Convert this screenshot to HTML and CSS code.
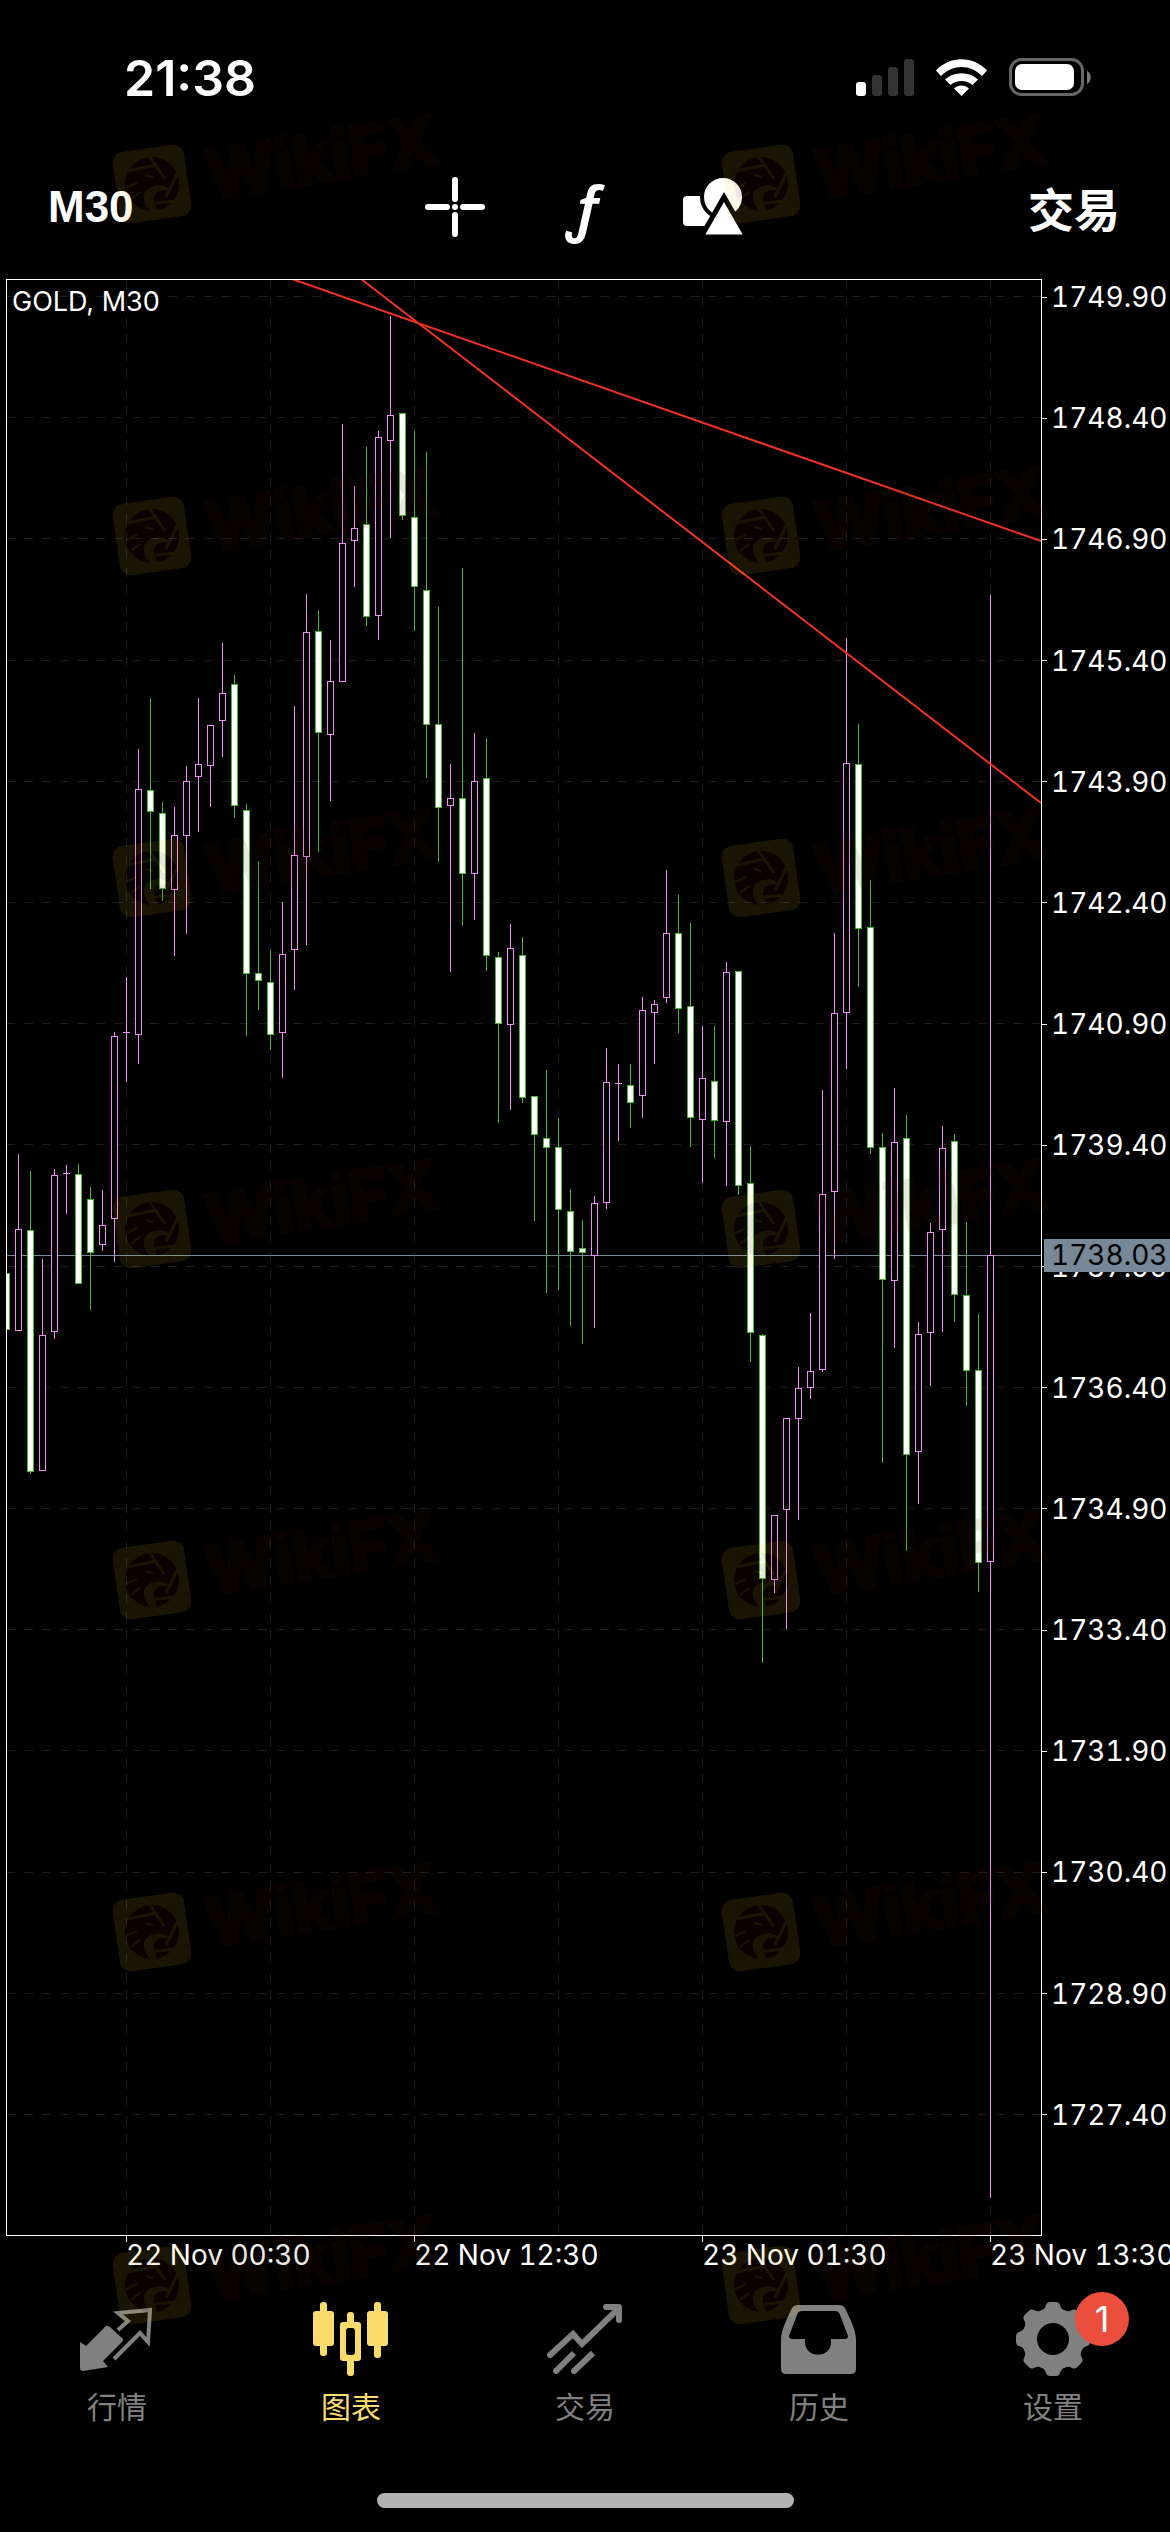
FILE: index.html
```
<!DOCTYPE html>
<html lang="zh-CN">

<head>
    <meta charset="utf-8" />
    <title>GOLD, M30</title>
    <meta name="viewport" content="width=device-width, initial-scale=1" />
    <link rel="stylesheet" href="styles.css">
</head>

<body>
    <div class="status-bar">
        <span class="time">21:38</span>
        <svg class="status-icons" viewBox="0 0 238 42" aria-hidden="true">
            <rect x="2" y="25" width="10" height="14" rx="3" fill="#fff" />
            <rect x="18" y="18" width="10" height="21" rx="3" fill="#333" />
            <rect x="34" y="10" width="10" height="29" rx="3" fill="#333" />
            <rect x="50" y="2" width="10" height="37" rx="3" fill="#333" />
            <path d="M82 13.500 C96 -1.500 119 -1.500 133 13.500 L128 19 C116 7 99 7 87 19 Z" fill="#fff" />
            <path d="M91 22.500 C100 14 115 14 124 22.500 L118.500 28 C112.500 22.500 102.500 22.500 96.500 28 Z" fill="#fff" />
            <path d="M100 31.500 C104 27.500 111 27.500 115 31.500 L107.500 39 Z" fill="#fff" />
            <rect x="156.500" y="2.500" width="72" height="35" rx="11" fill="none" stroke="#666" stroke-width="3" />
            <rect x="161" y="7" width="59" height="26" rx="7" fill="#fff" />
            <path d="M233 14 c5 2 5 11 0 13 z" fill="#777" />
        </svg>
    </div>

    <header class="toolbar">
        <button class="timeframe" type="button">M30</button>
        <div class="tools">
            <button class="tool" type="button" aria-label="十字光标">
                <svg viewBox="0 0 60 60">
                    <path d="M30 3V22M30 38V57M3 30H22M38 30H57" stroke="#fff" stroke-width="6" stroke-linecap="round" />
                    <circle cx="30" cy="30" r="3" fill="#fff" />
                </svg>
            </button>
            <button class="tool function" type="button" aria-label="指标">ƒ</button>
            <button class="tool" type="button" aria-label="对象">
                <svg viewBox="0 0 60 60">
                    <rect x="0" y="19" width="34" height="30" rx="4" fill="#fff" />
                    <circle cx="40" cy="20" r="21" fill="#fff" stroke="#000" stroke-width="4" />
                    <path d="M41 20 L64 60 H18 Z" fill="#fff" stroke="#000" stroke-width="5" />
                </svg>
            </button>
        </div>
        <button class="trade" type="button">交易</button>
    </header>

    <main class="chart">
        <svg id="plot" class="plot" viewBox="6 279 1036 1957" role="img" aria-label="GOLD, M30">
            <g id="grid" class="grid"></g>
            <path class="price-line" d="M6 1255.500H1041" />
            <g id="candles"></g>
            <path class="trend" d="M292 279L1041 541M361 279L1041 803" />
            <rect class="frame" x="6.500" y="279.500" width="1035" height="1956" />
            <text class="symbol" x="12" y="311">GOLD, M30</text>
        </svg>
        <div class="price-axis">
            <ul>
                <li>1749.90</li>
                <li>1748.40</li>
                <li>1746.90</li>
                <li>1745.40</li>
                <li>1743.90</li>
                <li>1742.40</li>
                <li>1740.90</li>
                <li>1739.40</li>
                <li>1737.90</li>
                <li>1736.40</li>
                <li>1734.90</li>
                <li>1733.40</li>
                <li>1731.90</li>
                <li>1730.40</li>
                <li>1728.90</li>
                <li>1727.40</li>
            </ul>
            <span class="price-tag">1738.03</span>
        </div>
    </main>
    <ul class="time-axis">
        <li>22 Nov 00:30</li>
        <li>22 Nov 12:30</li>
        <li>23 Nov 01:30</li>
        <li>23 Nov 13:30</li>
    </ul>

    <nav class="tabs">
        <a href="#quotes" class="tab">
            <svg viewBox="0 0 80 80">
                <path d="M3 43 L9 47 L28 28 Q30 26 33 28 L45 39 Q47 41 45 43 L26 62 L31 68 L6 72 Q3 72 3 69 Z" fill="currentColor" />
                <path d="M41 31 L51 22 L41 14 L73 11 L71 43 L63 34 L37 60" fill="none" stroke="currentColor" stroke-width="4" />
            </svg>
            行情
        </a>
        <a href="#chart" class="tab active">
            <svg viewBox="0 0 80 80" fill="currentColor">
                <rect x="9" y="3" width="7" height="54" rx="3" />
                <rect x="2" y="12" width="21" height="35" rx="3" />
                <rect x="36" y="13" width="7" height="64" rx="3" />
                <rect x="29" y="23" width="21" height="39" rx="3" />
                <rect x="35" y="29" width="9" height="27" rx="3" fill="#000" />
                <rect x="63" y="3" width="7" height="56" rx="3" />
                <rect x="56" y="12" width="21" height="35" rx="3" />
            </svg>
            图表
        </a>
        <a href="#trade" class="tab">
            <svg viewBox="0 0 80 80" fill="none" stroke="currentColor" stroke-width="6">
                <path d="M5 56 L28 35 L37 45 L73 10" stroke-linecap="round" />
                <path d="M61 8 H74 V21" stroke-linecap="round" stroke-linejoin="round" />
                <path d="M11 72 L29 54M29 72 L48 54" />
                <path d="M11 72 h0M29 72 h0" stroke-linecap="round" />
            </svg>
            交易
        </a>
        <a href="#history" class="tab">
            <svg viewBox="0 0 80 80">
                <path fill="currentColor" fill-rule="evenodd" d="M19 6 H60 Q65 6 67 11 C73 24 77 32 77 42 V70 Q77 75 72 75 H7 Q2 75 2 70 V42 C2 32 6 24 12 11 Q14 6 19 6 Z M23 12 Q19 12 18 16 L10 37 Q10 40 13 40 H26 V43 C26 60 52 60 52 43 V40 H66 Q69 40 69 37 L61 16 Q60 12 56 12 Z" />
            </svg>
            历史
        </a>
        <a href="#settings" class="tab">
            <svg viewBox="0 0 80 80">
                <g id="gear" fill="currentColor"></g>
                <circle cx="40" cy="40" r="16" fill="#000" />
            </svg>
            设置
            <span class="badge">1</span>
        </a>
    </nav>
    <div class="home-indicator"></div>

    <svg class="watermark" viewBox="0 0 1170 2532" aria-hidden="true">
        <defs>
            <g id="mark">
                <g opacity="0.100">
                    <rect x="-36" y="-36" width="72" height="72" rx="11" fill="#ffc81e" transform="rotate(-8)" />
                    <circle r="27" fill="#501e00" />
                    <path d="M-25 -13 L5 -19M-3 -28 L13 -5M27 -14 L14 13M24 17 L-5 20" stroke="#ffc81e" stroke-width="3" fill="none" />
                    <path d="M-2 27 C-13 14 -8 3 3 2 C10 0 16 3 18 7 C9 4 0 8 2 18 L6 28 Z" fill="#ffc81e" />
                    <path d="M-25 -3 C-20 -14 0 -20 11 -5 L11 -1 C4 -4 1 0 -1 3 C-9 6 -11 15 -7 25 L-10 25 C-17 14 -20 12 -24 13 Z" fill="#501e00" />
                    <path d="M-7 -9 L1 -7M-26 4 L-15 -1M-21 15 L-12 8" stroke="#ffc81e" stroke-width="2" fill="none" />
                </g>
                <text class="brand" transform="translate(58 15) rotate(-9)">WikiFX</text>
            </g>
        </defs>
        <g id="marks"></g>
    </svg>

    <script>
        const SVG = 'http://www.w3.org/2000/svg';

        function draw(parent, tag, attrs) {
            const el = document.createElementNS(SVG, tag);
            for (const key in attrs) el.setAttribute(key, attrs[key]);
            parent.appendChild(el);
        }

        // direction, high, body top, body bottom, low
        const bars = [
            ['down', 1273, 1273, 1329, 1329], ['up', 1154, 1229, 1330, 1330], ['down', 1171, 1230, 1471, 1473],
            ['up', 1259, 1335, 1470, 1470], ['up', 1169, 1175, 1331, 1338], ['up', 1165, 1173, 1173, 1213],
            ['down', 1164, 1174, 1283, 1283], ['down', 1187, 1199, 1252, 1309], ['up', 1190, 1225, 1244, 1250],
            ['up', 1032, 1036, 1218, 1261], ['up', 977, 1032, 1032, 1081], ['up', 749, 789, 1034, 1063],
            ['down', 698, 790, 811, 888], ['down', 802, 813, 888, 900], ['up', 807, 835, 889, 955],
            ['up', 766, 781, 835, 933], ['up', 698, 764, 776, 831], ['up', 725, 725, 765, 806],
            ['up', 643, 693, 720, 756], ['down', 675, 684, 805, 817], ['down', 804, 810, 973, 1035],
            ['down', 861, 973, 980, 1009], ['down', 950, 982, 1034, 1049], ['up', 902, 954, 1032, 1077],
            ['up', 706, 855, 949, 989], ['up', 594, 632, 856, 944], ['down', 610, 631, 732, 851],
            ['up', 640, 681, 734, 800], ['up', 424, 543, 681, 681], ['up', 486, 528, 540, 586],
            ['down', 447, 524, 616, 625], ['up', 431, 437, 615, 639], ['up', 316, 415, 440, 537],
            ['down', 413, 413, 515, 519], ['down', 431, 517, 586, 630], ['down', 452, 590, 724, 777],
            ['down', 607, 724, 807, 861], ['up', 764, 798, 805, 971], ['down', 568, 798, 873, 925],
            ['up', 733, 781, 873, 919], ['down', 738, 778, 955, 970], ['down', 952, 957, 1023, 1122],
            ['up', 924, 948, 1024, 1109], ['down', 937, 955, 1097, 1102], ['down', 1096, 1096, 1134, 1220],
            ['down', 1070, 1138, 1147, 1292], ['down', 1118, 1147, 1209, 1289], ['down', 1189, 1211, 1251, 1325],
            ['down', 1220, 1248, 1252, 1343], ['up', 1196, 1203, 1255, 1327], ['up', 1048, 1082, 1202, 1208],
            ['up', 1064, 1083, 1084, 1140], ['down', 1064, 1085, 1102, 1127], ['up', 997, 1010, 1095, 1117],
            ['up', 1000, 1004, 1012, 1063], ['up', 870, 933, 997, 1002], ['down', 895, 933, 1008, 1032],
            ['down', 923, 1006, 1117, 1146], ['up', 1026, 1078, 1119, 1182], ['down', 1026, 1081, 1120, 1157],
            ['up', 962, 972, 1121, 1185], ['down', 971, 971, 1185, 1194], ['down', 1146, 1183, 1332, 1361],
            ['down', 1334, 1335, 1578, 1662], ['up', 1515, 1515, 1579, 1592], ['up', 1418, 1418, 1509, 1628],
            ['up', 1367, 1388, 1418, 1519], ['up', 1313, 1371, 1387, 1398], ['up', 1090, 1194, 1369, 1371],
            ['up', 933, 1013, 1191, 1258], ['up', 638, 763, 1012, 1068], ['down', 724, 764, 928, 986],
            ['down', 880, 927, 1147, 1153], ['down', 1133, 1147, 1279, 1462], ['up', 1088, 1142, 1280, 1347],
            ['down', 1115, 1138, 1454, 1550], ['up', 1322, 1334, 1451, 1503], ['up', 1223, 1232, 1332, 1385],
            ['up', 1126, 1148, 1229, 1331], ['down', 1134, 1141, 1294, 1321], ['down', 1222, 1295, 1370, 1405],
            ['down', 1314, 1370, 1562, 1591], ['up', 595, 1255, 1561, 2197]
        ];

        const grid = document.getElementById('grid');
        for (let i = 0; i < 16; i++) {
            const y = Math.round(296 + i * 121.2) + 0.5;
            draw(grid, 'path', { d: `M6 ${y}H1041` });
        }
        for (let i = 0; i < 7; i++) {
            draw(grid, 'path', { d: `M${126.5 + i * 144} 280V2235` });
        }

        const candles = document.getElementById('candles');
        bars.forEach(([dir, high, top, bottom, low], i) => {
            const x = 6.5 + i * 12;
            draw(candles, 'path', { class: 'wick ' + dir, d: `M${x} ${high}V${top}M${x} ${bottom}V${low + 1}` });
            if (bottom - top < 2) {
                draw(candles, 'path', { class: 'wick ' + dir, d: `M${x - 3.5} ${top + 0.5}h7` });
            } else {
                draw(candles, 'rect', { class: 'body ' + dir, x: x - 3, y: top + 0.5, width: 6, height: bottom - top });
            }
        });

        const gear = document.getElementById('gear');
        draw(gear, 'circle', { cx: 40, cy: 40, r: 31 });
        for (let a = 0; a < 360; a += 45) {
            draw(gear, 'path', { d: 'M28 12 Q32 10 33 6 Q34 3 37 3 H43 Q46 3 47 6 Q48 10 52 12 Z', transform: `rotate(${a} 40 40)` });
        }

        const marks = document.getElementById('marks');
        for (const y of [184, 536, 878, 1229, 1580, 1932, 2285]) {
            draw(marks, 'use', { href: '#mark', x: 152, y: y });
            draw(marks, 'use', { href: '#mark', x: 761, y: y });
        }
    </script>
</body>

</html>
```
FILE: styles.css
```
* {
    box-sizing: border-box;
}

body {
    position: relative;
    display: flex;
    flex-direction: column;
    min-height: 100vh;
    margin: 0;
    background: #000;
    color: #fff;
    font-family: Inter, "Noto Sans CJK SC", sans-serif;
    font-size: 28px;
    overflow-x: hidden;
}

ul {
    margin: 0;
    padding: 0;
    list-style: none;
}

button {
    padding: 0;
    border: 0;
    background: none;
    color: inherit;
    font-family: inherit;
}

.status-bar {
    display: flex;
    align-items: center;
    justify-content: space-between;
    padding: 50px 78px 0 124px;
}

.time {
    font-size: 50px;
    font-weight: 600;
    line-height: 56px;
}

.status-icons {
    width: 238px;
    height: 42px;
}

.toolbar {
    display: grid;
    grid-template-columns: 1fr auto 1fr;
    align-items: center;
    height: 173px;
    padding: 28px 50px 0 48px;
}

.timeframe {
    justify-self: start;
    font-family: "Liberation Sans Narrow", "Liberation Sans", sans-serif;
    font-size: 44px;
    font-weight: bold;
}

.tools {
    display: flex;
    gap: 69px;
}

.tool {
    width: 60px;
    height: 60px;
}

.tool svg {
    display: block;
    overflow: visible;
}

.function {
    font-family: "Noto Sans", sans-serif;
    font-size: 60px;
    font-style: italic;
    font-weight: 600;
    line-height: 52px;
}

.trade {
    justify-self: end;
    font-size: 46px;
    font-weight: bold;
}

.chart {
    display: grid;
    grid-template-columns: 1fr 128px;
    padding-left: 6px;
}

.plot {
    display: block;
    width: 100%;
}

.plot path,
.plot rect {
    fill: none;
    shape-rendering: crispEdges;
}

.grid {
    stroke: #1c1c1c;
    stroke-dasharray: 9 9;
}

.price-line {
    stroke: #778899;
}

.plot .up {
    stroke: #f08af4;
}

.plot .down {
    stroke: #4cb830;
}

.plot .body.down {
    fill: #fff;
}

.plot .body.up {
    fill: #000;
}

.plot .trend {
    stroke: #f03223;
    stroke-width: 2;
    shape-rendering: auto;
}

.frame {
    stroke: #fff;
}

.symbol {
    fill: #fff;
    font-size: 27px;
}

.price-axis {
    position: relative;
    padding: 2px 0 105px;
    font-variant-numeric: tabular-nums;
}

.price-axis ul {
    display: flex;
    flex-direction: column;
    justify-content: space-between;
    height: 100%;
}

.price-axis li {
    display: flex;
    align-items: center;
    gap: 4px;
    line-height: 32px;
}

.price-axis li::before {
    content: "";
    width: 5px;
    height: 1px;
    background: #fff;
}

.price-tag {
    position: absolute;
    top: 960px;
    right: 0;
    left: 2px;
    padding-left: 7px;
    background: #778899;
    color: #000;
    line-height: 33px;
}

.time-axis {
    display: grid;
    grid-template-columns: repeat(3, 1fr) 180px;
    padding-left: 126px;
    font-variant-numeric: tabular-nums;
}

.time-axis li {
    line-height: 26px;
    white-space: nowrap;
}

.time-axis li::before {
    content: "";
    display: block;
    width: 1px;
    height: 6px;
    background: #fff;
}

.tabs {
    display: grid;
    grid-template-columns: repeat(5, 1fr);
    padding-top: 31px;
}

.tab {
    position: relative;
    display: flex;
    flex-direction: column;
    align-items: center;
    gap: 8px;
    color: #808080;
    font-size: 30px;
    line-height: 40px;
    text-decoration: none;
}

.tab svg {
    width: 80px;
    height: 80px;
}

.tab.active {
    color: #f9dc6c;
}

.badge {
    position: absolute;
    top: -7px;
    left: 50%;
    width: 54px;
    height: 54px;
    margin-left: 22px;
    border-radius: 50%;
    background: #eb4e3d;
    color: #fff;
    font-size: 36px;
    line-height: 54px;
    text-align: center;
}

.home-indicator {
    width: 417px;
    height: 15px;
    margin: auto auto 24px;
    border-radius: 8px;
    background: #b3b3b3;
}

.watermark {
    position: absolute;
    top: 0;
    left: 0;
    width: 100%;
    pointer-events: none;
}

.brand {
    fill: #501e00;
    stroke: #501e00;
    stroke-width: 4;
    stroke-linejoin: round;
    font-size: 67px;
    font-weight: bold;
    opacity: 0.1;
}
```
